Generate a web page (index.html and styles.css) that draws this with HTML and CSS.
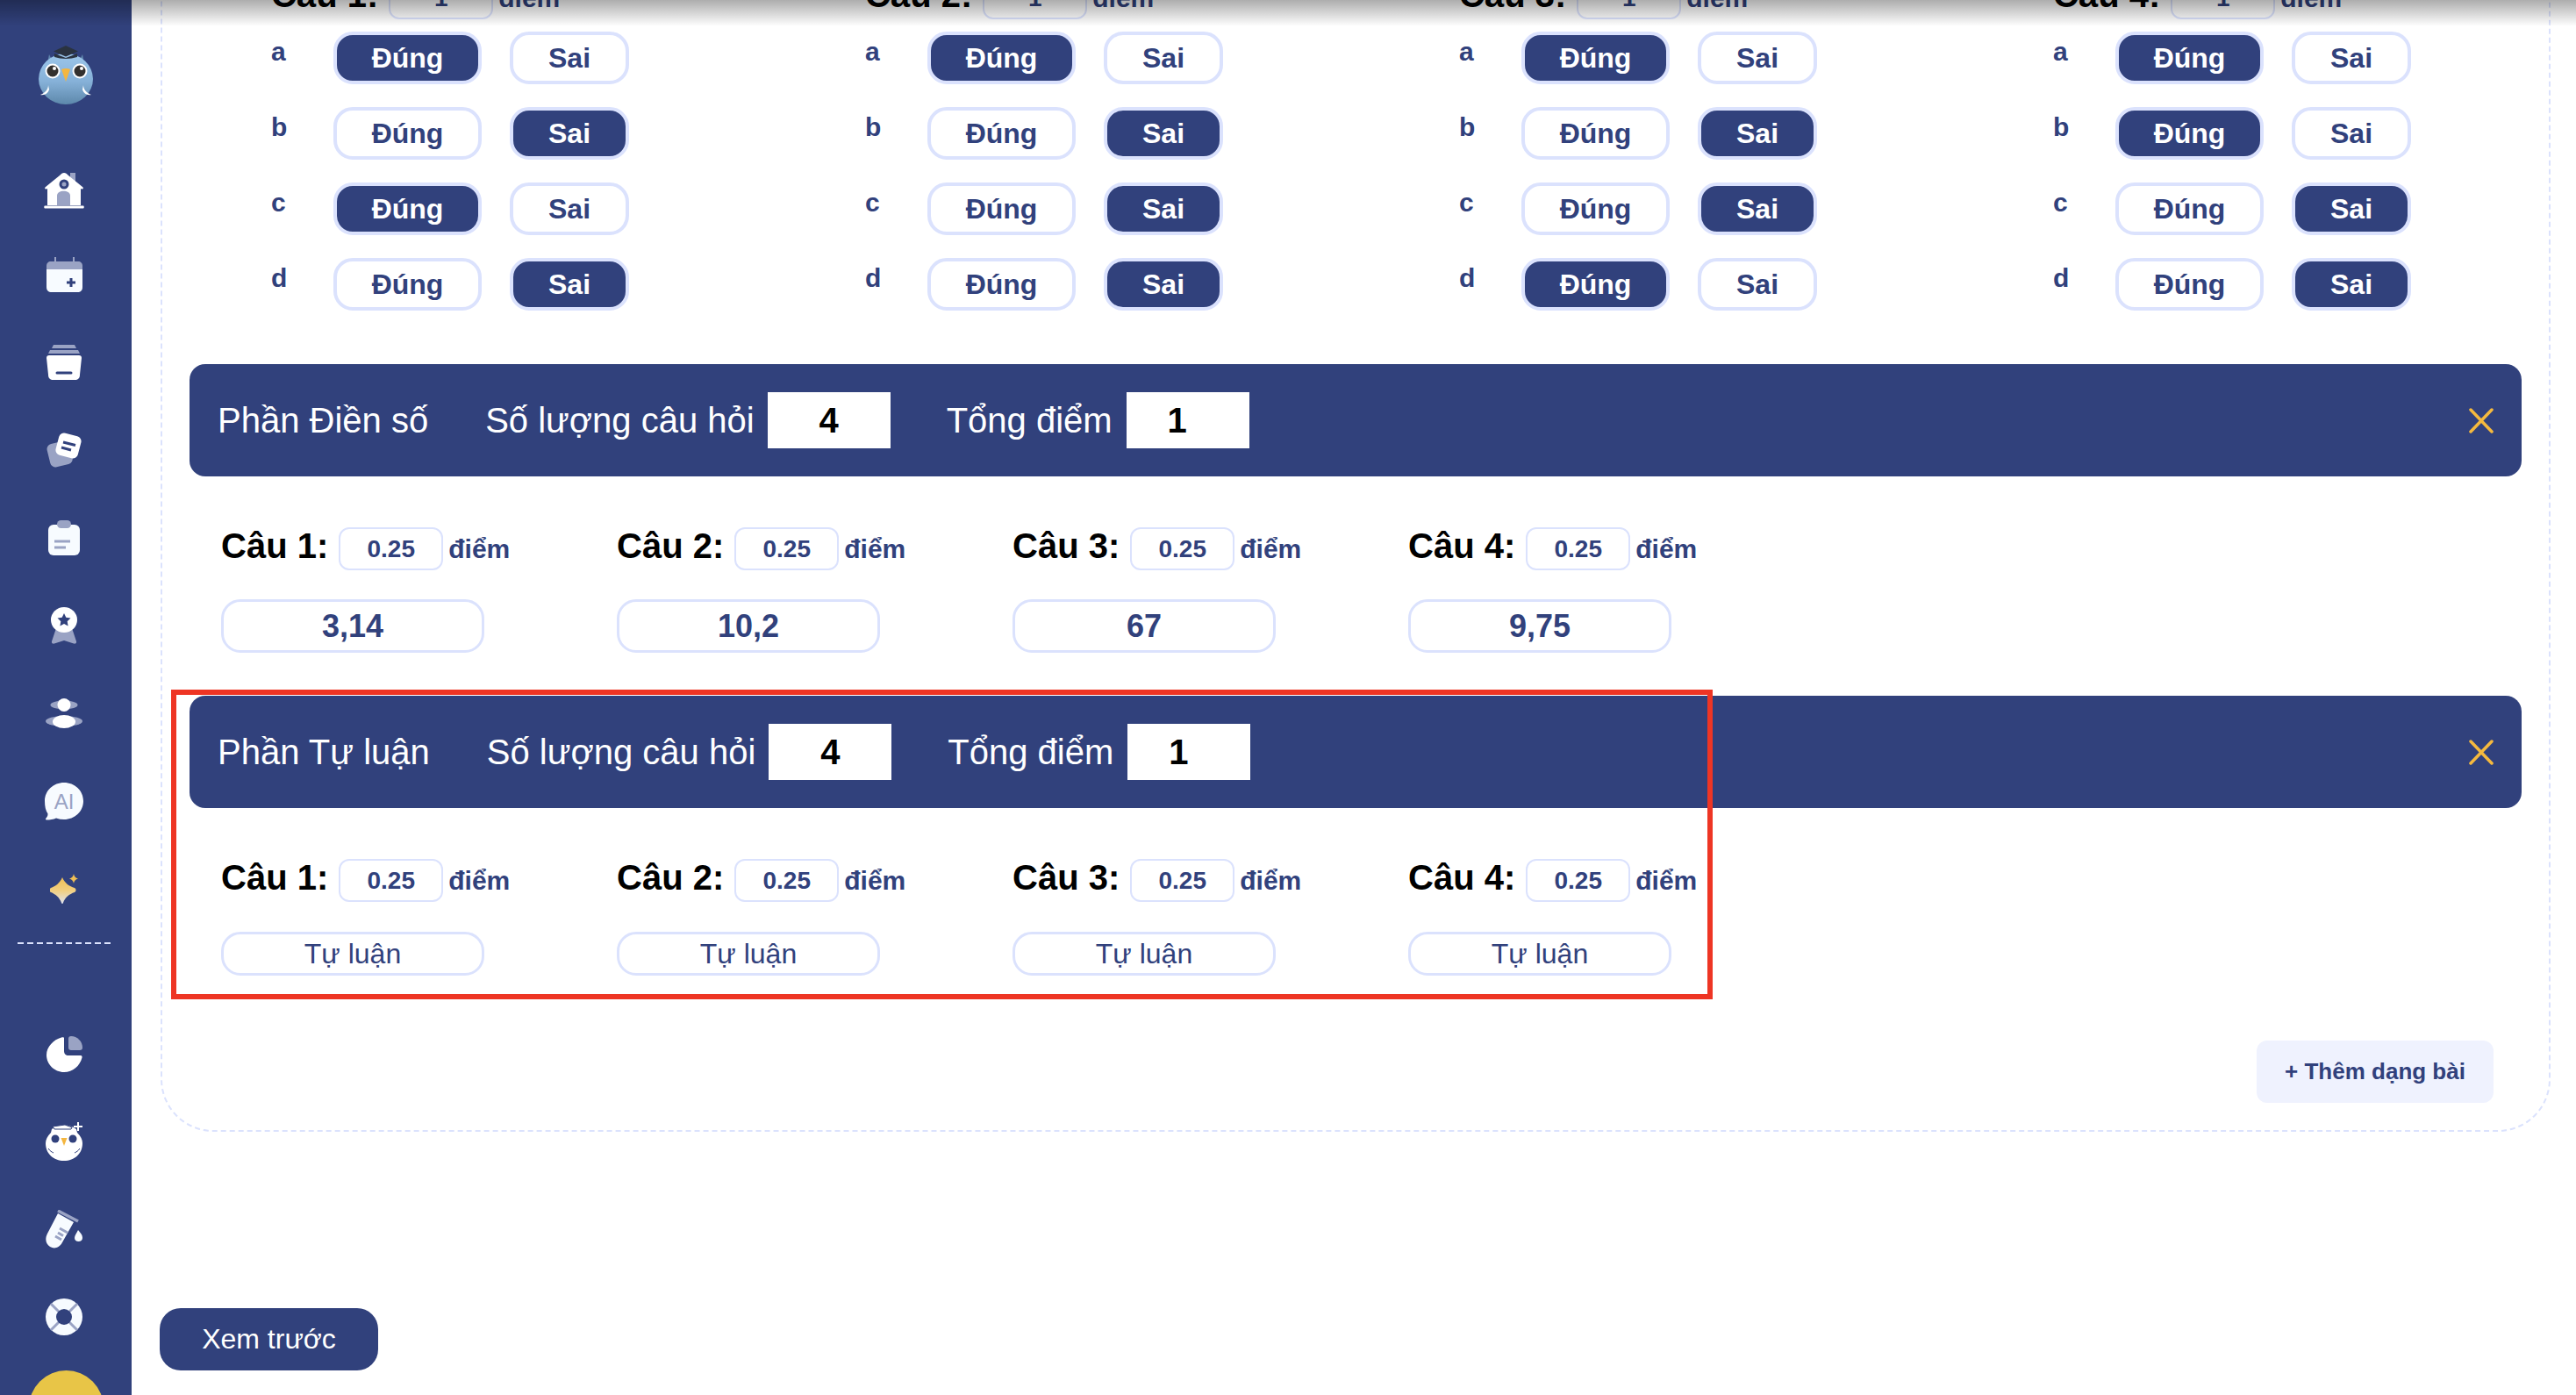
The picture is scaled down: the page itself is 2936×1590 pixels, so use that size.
FILE: index.html
```html
<!DOCTYPE html>
<html lang="vi">

<head>
    <meta charset="UTF-8">
    <meta name="viewport" content="width=device-width, initial-scale=1.0">
    <title>Tạo đề thi</title>
    <link rel="stylesheet" href="styles.css">
</head>

<body>
    <div class="top-shadow"></div>

    <aside class="sidebar">
        <svg class="logo" width="62" height="67" viewBox="0 0 62 67">
            <defs>
                <linearGradient id="owlBody" x1="0" y1="0" x2="0" y2="1">
                    <stop offset="0" stop-color="#9cc6ea" />
                    <stop offset="0.55" stop-color="#86b1d8" />
                    <stop offset="1" stop-color="#5d88ab" />
                </linearGradient>
            </defs>
            <path d="M12 10l2 4h34l2-4 2 10H10z" fill="#5f86ad" />
            <ellipse cx="31" cy="38" rx="31" ry="29" fill="url(#owlBody)" />
            <path d="M17 6.500L31 0l14 6.500-14 6z" fill="#2a3340" />
            <path d="M18 9v4c8 2.500 18 2.500 26 0V9l-13 5z" fill="#2a3340" />
            <circle cx="16" cy="29" r="8.500" fill="#fff" />
            <circle cx="47" cy="29" r="8.500" fill="#fff" />
            <circle cx="16" cy="29" r="6.500" fill="#33302e" />
            <circle cx="47" cy="29" r="6.500" fill="#33302e" />
            <circle cx="18" cy="26" r="2" fill="#fff" />
            <circle cx="49" cy="26" r="2" fill="#fff" />
            <path d="M26 27c3-1.500 7-1.500 10 0l-5 14z" fill="#f4b63f" />
            <path d="M11 45c0 5-4 9-9 11 5 1 9-2 10-6zM51 45c0 5 4 9 9 11-5 1-9-2-10-6z" fill="#fff" />
        </svg>

        <nav class="nav-group">
            <a class="nav-item nav-home" href="#">
                <svg width="46" height="42" viewBox="0 0 46 42">
                    <path d="M30 1h6v12h-6z" fill="#9aa3c4" />
                    <path d="M23 1c2 0 3 1 5 3l16 13c1.500 1 1 3-1 2.500l-1-.5V38H4V19l-1 .5c-2 .5-2.500-1.500-1-2.500L18 4c2-2 3-3 5-3z" fill="#fff" />
                    <path d="M1 38.500h44c1 0 1 3 0 3H1c-1 0-1-3 0-3z" fill="#fff" />
                    <circle cx="23" cy="14" r="5.500" fill="#31417c" />
                    <circle cx="23" cy="14" r="2.500" fill="#9aa3c4" />
                    <path d="M15 38V27c0-7 15-7 15 0v11z" fill="#9aa3c4" />
                </svg>
            </a>
            <a class="nav-item" href="#">
                <svg width="41" height="40" viewBox="0 0 41 40">
                    <path d="M9 0h2v6H9zM30 0h2v6h-2z" fill="#9aa3c4" />
                    <path d="M0 14V10c0-3 2-5 5-5h31c3 0 5 2 5 5v4z" fill="#9aa3c4" />
                    <path d="M0 14h41v20c0 4-2 6-6 6H6c-4 0-6-2-6-6z" fill="#f7fbff" />
                    <path d="M28 24v10M23 29h10" stroke="#31417c" stroke-width="3" />
                </svg>
            </a>
            <a class="nav-item" href="#">
                <svg width="40" height="40" viewBox="0 0 40 40">
                    <path d="M8 0h24l2 4H6z" fill="#9aa3c4" />
                    <path d="M4 6h32l2 4H2z" fill="#9aa3c4" />
                    <path d="M3 12h34c2 0 3 1 3 3l-2 19c0 4-2 6-6 6H8c-4 0-6-2-6-6L0 15c0-2 1-3 3-3z" fill="#fff" />
                    <path d="M12 32h16" stroke="#31417c" stroke-width="3" stroke-linecap="round" />
                </svg>
            </a>
            <a class="nav-item" href="#">
                <svg width="42" height="42" viewBox="0 0 42 42">
                    <rect x="3" y="12" width="26" height="27" rx="6" fill="#9aa3c4" transform="rotate(-14 16 25)" />
                    <rect x="13" y="3" width="26" height="26" rx="6" fill="#fff" transform="rotate(15 26 16)" />
                    <path d="M20 12l14 3.500M18 18l11 3" stroke="#31417c" stroke-width="3" />
                </svg>
            </a>
            <a class="nav-item" href="#">
                <svg width="36" height="40" viewBox="0 0 36 40">
                    <rect y="5" width="36" height="35" rx="6" fill="#f7fbff" />
                    <rect x="10" width="16" height="9" rx="4.500" fill="#9aa3c4" />
                    <path d="M7 24h18M7 31h13" stroke="#9aa3c4" stroke-width="3" />
                </svg>
            </a>
            <a class="nav-item" href="#">
                <svg width="30" height="42" viewBox="0 0 30 42">
                    <path d="M6 24h18l5 15c.500 2-1 3-3 2.500L15 38 4 41.500c-2 .500-3.500-.500-3-2.500z" fill="#9aa3c4" />
                    <ellipse cx="15" cy="14.500" rx="15" ry="14.500" fill="#fff" />
                    <path d="M15 7l2.300 4.800 5.200.7-3.800 3.700.9 5.300-4.600-2.500-4.600 2.500.9-5.300-3.800-3.700 5.200-.7z" fill="#31417c" />
                </svg>
            </a>
            <a class="nav-item" href="#">
                <svg width="42" height="34" viewBox="0 0 42 34">
                    <ellipse cx="21" cy="7.500" rx="15.500" ry="5" fill="#9aa3c4" />
                    <ellipse cx="21" cy="26" rx="21" ry="6" fill="#9aa3c4" />
                    <ellipse cx="21" cy="7.500" rx="7.500" ry="7.500" fill="#fff" />
                    <ellipse cx="21" cy="26.500" rx="13" ry="7.500" fill="#fff" />
                </svg>
            </a>
            <a class="nav-item" href="#">
                <svg width="44" height="44" viewBox="0 0 44 44">
                    <path d="M22 1c12 0 22 9 22 21S34 43 22 43c-3 0-6-.500-9-1.500-3 1.500-7 2-11 2-1 0-1.500-1-.500-2 1.500-1.500 2-3 2-5C1 33 0 28 0 22 0 10 10 1 22 1z" fill="#f7fbff" />
                    <text class="ai-text" x="22" y="31" text-anchor="middle">AI</text>
                </svg>
            </a>
            <a class="nav-item" href="#">
                <svg width="32" height="34" viewBox="0 0 32 34">
                    <defs>
                        <linearGradient id="sparkFill" x1="0" y1="0" x2="0" y2="1">
                            <stop offset="0" stop-color="#f0bf55" />
                            <stop offset="0.5" stop-color="#f2cf80" />
                            <stop offset="1" stop-color="#dfe3f2" />
                        </linearGradient>
                    </defs>
                    <path d="M14 4C17 11 22 14 28 16 30 17 30 20 28 21 22 23 17 27 15 33 14.500 34.500 13.500 34.500 13 33 11 27 6 23 1 21-1 20-1 17 1 16 6 14 11 11 14 4z" fill="url(#sparkFill)" />
                    <path d="M27 0c.500 3 2 4.500 5 5.500-3 1-4.500 2.500-5 5.500-.500-3-2-4.500-5-5.500 3-1 4.500-2.500 5-5.500z" fill="#f0bf55" />
                </svg>
            </a>
        </nav>

        <div class="nav-divider"></div>

        <nav class="nav-group nav-bottom">
            <a class="nav-item" href="#">
                <svg width="41" height="41" viewBox="0 0 41 41">
                    <path d="M20 2v15c0 3 2 5 5 5h14c1 0 2 1 1.500 2.500C38 34 30 41 20 41 9 41 0 32 0 21.500 0 12 8 4 17 1.500 19 1 20 1 20 2z" fill="#fff" />
                    <path d="M25 3c0-2 1-3 3-3 7 0 13 6 13 13 0 2-1 3-3 3H28c-2 0-3-1-3-3z" fill="#9aa3c4" />
                </svg>
            </a>
            <a class="nav-item" href="#">
                <svg width="42" height="44" viewBox="0 0 42 44">
                    <path d="M7 8c8-6 20-6 28 0l1 4c4 4 6 8 6 12 0 12-9 20-21 20S0 36 0 24c0-4 2-8 6-12z" fill="#fff" />
                    <path d="M8 5l14-2 8 3-1 2H10z" fill="#fff" stroke="#31417c" stroke-width="1" />
                    <path d="M37 0v10M32 5h10" stroke="#fff" stroke-width="2" />
                    <circle cx="11" cy="19" r="4.500" fill="#31417c" />
                    <circle cx="31" cy="19" r="4.500" fill="#31417c" />
                    <path d="M17.500 18h7L21 27z" fill="#f4b63f" />
                    <path d="M3 30c2 3 4 4 6 5M39 30c-2 3-4 4-6 5" stroke="#31417c" stroke-width="1" fill="none" />
                </svg>
            </a>
            <a class="nav-item" href="#">
                <svg width="42" height="44" viewBox="0 0 42 44">
                    <path d="M14 4L32 14 19 37c-3 6-9 8-14 5S-1 33 2 27z" fill="#f7fbff" />
                    <path d="M14 1l23 12" stroke="#9aa3c4" stroke-width="3.500" />
                    <path d="M16 21l9 5M14 26l6 3.500M11 30l7 4" stroke="#9aa3c4" stroke-width="3" />
                    <path d="M37 23c3 4 5 5 5 9 0 2.500-2 4-4.500 4S33 34.500 33 32c0-3 2-5 4-9z" fill="#f7fbff" />
                </svg>
            </a>
            <a class="nav-item" href="#">
                <svg width="42" height="42" viewBox="0 0 42 42">
                    <circle cx="21" cy="21" r="21" fill="#f7fbff" />
                    <path d="M6 6l30 30M36 6L6 36" stroke="#9aa3c4" stroke-width="3" />
                    <circle cx="21" cy="21" r="9" fill="#31417c" />
                </svg>
            </a>
        </nav>

        <div class="avatar"></div>
    </aside>

    <main class="main">
        <div class="panel">
            <!-- Phần Đúng sai -->
            <div class="tf-grid">
                <div class="tf-col">
                    <div class="q-head">
                        <span class="q-label">Câu 1:</span>
                        <div class="q-score">1</div>
                        <span class="q-unit">điểm</span>
                    </div>
                    <div class="tf-row"><span class="tf-key">a</span><div class="tf-btn tf-yes active">Đúng</div><div class="tf-btn tf-no">Sai</div></div>
                    <div class="tf-row"><span class="tf-key">b</span><div class="tf-btn tf-yes">Đúng</div><div class="tf-btn tf-no active">Sai</div></div>
                    <div class="tf-row"><span class="tf-key">c</span><div class="tf-btn tf-yes active">Đúng</div><div class="tf-btn tf-no">Sai</div></div>
                    <div class="tf-row"><span class="tf-key">d</span><div class="tf-btn tf-yes">Đúng</div><div class="tf-btn tf-no active">Sai</div></div>
                </div>
                <div class="tf-col">
                    <div class="q-head">
                        <span class="q-label">Câu 2:</span>
                        <div class="q-score">1</div>
                        <span class="q-unit">điểm</span>
                    </div>
                    <div class="tf-row"><span class="tf-key">a</span><div class="tf-btn tf-yes active">Đúng</div><div class="tf-btn tf-no">Sai</div></div>
                    <div class="tf-row"><span class="tf-key">b</span><div class="tf-btn tf-yes">Đúng</div><div class="tf-btn tf-no active">Sai</div></div>
                    <div class="tf-row"><span class="tf-key">c</span><div class="tf-btn tf-yes">Đúng</div><div class="tf-btn tf-no active">Sai</div></div>
                    <div class="tf-row"><span class="tf-key">d</span><div class="tf-btn tf-yes">Đúng</div><div class="tf-btn tf-no active">Sai</div></div>
                </div>
                <div class="tf-col">
                    <div class="q-head">
                        <span class="q-label">Câu 3:</span>
                        <div class="q-score">1</div>
                        <span class="q-unit">điểm</span>
                    </div>
                    <div class="tf-row"><span class="tf-key">a</span><div class="tf-btn tf-yes active">Đúng</div><div class="tf-btn tf-no">Sai</div></div>
                    <div class="tf-row"><span class="tf-key">b</span><div class="tf-btn tf-yes">Đúng</div><div class="tf-btn tf-no active">Sai</div></div>
                    <div class="tf-row"><span class="tf-key">c</span><div class="tf-btn tf-yes">Đúng</div><div class="tf-btn tf-no active">Sai</div></div>
                    <div class="tf-row"><span class="tf-key">d</span><div class="tf-btn tf-yes active">Đúng</div><div class="tf-btn tf-no">Sai</div></div>
                </div>
                <div class="tf-col">
                    <div class="q-head">
                        <span class="q-label">Câu 4:</span>
                        <div class="q-score">1</div>
                        <span class="q-unit">điểm</span>
                    </div>
                    <div class="tf-row"><span class="tf-key">a</span><div class="tf-btn tf-yes active">Đúng</div><div class="tf-btn tf-no">Sai</div></div>
                    <div class="tf-row"><span class="tf-key">b</span><div class="tf-btn tf-yes active">Đúng</div><div class="tf-btn tf-no">Sai</div></div>
                    <div class="tf-row"><span class="tf-key">c</span><div class="tf-btn tf-yes">Đúng</div><div class="tf-btn tf-no active">Sai</div></div>
                    <div class="tf-row"><span class="tf-key">d</span><div class="tf-btn tf-yes">Đúng</div><div class="tf-btn tf-no active">Sai</div></div>
                </div>
            </div>

            <!-- Phần Điền số -->
            <section class="part part-number">
                <div class="part-bar">
                    <span class="part-title">Phần Điền số</span>
                    <span class="part-text">Số lượng câu hỏi</span>
                    <div class="part-input">4</div>
                    <span class="part-text part-total">Tổng điểm</span>
                    <div class="part-input part-input-total">1</div>
                    <svg class="part-close" width="28" height="29" viewBox="0 0 28 29">
                        <path d="M2 2l24 25M26 2L2 27" stroke="#f5b93e" stroke-width="3.500" stroke-linecap="round" />
                    </svg>
                </div>
                <div class="q-grid">
                    <div class="q-cell">
                        <div class="q-head"><span class="q-label">Câu 1:</span><div class="q-score">0.25</div><span class="q-unit">điểm</span></div>
                        <div class="answer">3,14</div>
                    </div>
                    <div class="q-cell">
                        <div class="q-head"><span class="q-label">Câu 2:</span><div class="q-score">0.25</div><span class="q-unit">điểm</span></div>
                        <div class="answer">10,2</div>
                    </div>
                    <div class="q-cell">
                        <div class="q-head"><span class="q-label">Câu 3:</span><div class="q-score">0.25</div><span class="q-unit">điểm</span></div>
                        <div class="answer">67</div>
                    </div>
                    <div class="q-cell">
                        <div class="q-head"><span class="q-label">Câu 4:</span><div class="q-score">0.25</div><span class="q-unit">điểm</span></div>
                        <div class="answer">9,75</div>
                    </div>
                </div>
            </section>

            <!-- Phần Tự luận -->
            <section class="part part-essay">
                <div class="part-bar">
                    <span class="part-title">Phần Tự luận</span>
                    <span class="part-text">Số lượng câu hỏi</span>
                    <div class="part-input">4</div>
                    <span class="part-text part-total">Tổng điểm</span>
                    <div class="part-input part-input-total">1</div>
                    <svg class="part-close" width="28" height="29" viewBox="0 0 28 29">
                        <path d="M2 2l24 25M26 2L2 27" stroke="#f5b93e" stroke-width="3.500" stroke-linecap="round" />
                    </svg>
                </div>
                <div class="q-grid">
                    <div class="q-cell">
                        <div class="q-head"><span class="q-label">Câu 1:</span><div class="q-score">0.25</div><span class="q-unit">điểm</span></div>
                        <div class="answer answer-essay">Tự luận</div>
                    </div>
                    <div class="q-cell">
                        <div class="q-head"><span class="q-label">Câu 2:</span><div class="q-score">0.25</div><span class="q-unit">điểm</span></div>
                        <div class="answer answer-essay">Tự luận</div>
                    </div>
                    <div class="q-cell">
                        <div class="q-head"><span class="q-label">Câu 3:</span><div class="q-score">0.25</div><span class="q-unit">điểm</span></div>
                        <div class="answer answer-essay">Tự luận</div>
                    </div>
                    <div class="q-cell">
                        <div class="q-head"><span class="q-label">Câu 4:</span><div class="q-score">0.25</div><span class="q-unit">điểm</span></div>
                        <div class="answer answer-essay">Tự luận</div>
                    </div>
                </div>
                <div class="red-mark"></div>
            </section>

            <div class="add-row">
                <div class="add-btn">+ Thêm dạng bài</div>
            </div>
        </div>

        <div class="preview-btn">Xem trước</div>
    </main>
</body>

</html>
```

FILE: styles.css
```css
* {
    box-sizing: border-box;
}

body {
    font-family: 'Liberation Sans', Arial, sans-serif;
    margin: 0;
    height: 100vh;
    display: flex;
    overflow: hidden;
    position: relative;
    background: #fff;
    color: #31417c;
}

.top-shadow {
    position: absolute;
    top: 0;
    left: 0;
    width: 100%;
    height: 30px;
    background: linear-gradient(to bottom, rgba(0, 0, 0, 0.32), rgba(0, 0, 0, 0));
    z-index: 5;
}

/* sidebar */
.sidebar {
    width: 150px;
    height: 100%;
    flex-shrink: 0;
    background: #31417c;
    display: flex;
    flex-direction: column;
    align-items: center;
    padding-top: 52px;
    overflow: hidden;
}

.logo {
    flex-shrink: 0;
    margin-bottom: 44px;
}

.nav-group {
    width: 100%;
    flex-shrink: 0;
}

.nav-item {
    height: 100px;
    padding-right: 4px;
    display: flex;
    align-items: center;
    justify-content: center;
}

.nav-home svg {
    margin-top: 8px;
}

.ai-text {
    font-family: 'Liberation Sans', Arial, sans-serif;
    font-size: 24px;
    fill: #9aa3c4;
}

.nav-divider {
    width: 110px;
    height: 2px;
    flex-shrink: 0;
    margin-top: 11px;
    background: repeating-linear-gradient(90deg, #dbe2fd 0, #dbe2fd 7px, transparent 7px, transparent 11px);
}

.nav-bottom {
    margin-top: 75px;
}

.avatar {
    width: 85px;
    height: 85px;
    flex-shrink: 0;
    margin-top: 11px;
    border-radius: 50%;
    background: #e8c547;
}

/* main content, page is scrolled so the panel starts above the window */
.main {
    flex: 1;
    min-width: 0;
    padding: 0 29px 0 33px;
}

.panel {
    margin-top: -60px;
    padding: 31px;
    border: 2px dashed #dbe2fd;
    border-radius: 60px;
}

.tf-grid {
    display: grid;
    grid-template-columns: repeat(4, 677px);
    margin-left: 93px;
    margin-bottom: 61px;
}

.q-head {
    display: flex;
    align-items: center;
}

.q-label {
    font-size: 40px;
    font-weight: 700;
    color: #000;
    margin-right: 12px;
    position: relative;
    top: -3px;
}

.q-score {
    width: 119px;
    height: 49px;
    border: 2px solid #dbe2fd;
    border-radius: 12px;
    display: flex;
    align-items: center;
    justify-content: center;
    font-size: 28px;
    font-weight: 700;
}

.q-unit {
    font-size: 30px;
    font-weight: 700;
    margin-left: 6px;
}

.tf-col .q-head {
    margin-bottom: 14px;
}

.tf-row {
    display: flex;
    align-items: flex-start;
    margin-bottom: 26px;
}

.tf-row:last-child {
    margin-bottom: 0;
}

.tf-key {
    width: 71px;
    padding-top: 6px;
    font-size: 30px;
    font-weight: 700;
}

.tf-btn {
    height: 60px;
    border: 4px solid #dbe2fd;
    border-radius: 22px;
    display: flex;
    align-items: center;
    justify-content: center;
    font-size: 32px;
    font-weight: 700;
}

.tf-btn.active {
    background: #31417c;
    color: #fff;
}

.tf-yes {
    width: 169px;
    margin-right: 32px;
}

.tf-no {
    width: 136px;
}

/* part blocks */
.part {
    position: relative;
}

.part-bar {
    height: 128px;
    padding: 0 32px 0 32px;
    background: #31417c;
    border-radius: 18px;
    display: flex;
    align-items: center;
    color: #fff;
    font-size: 40px;
}

.part-title {
    margin-right: 65px;
}

.part-input {
    width: 140px;
    height: 64px;
    margin-left: 15px;
    background: #fff;
    color: #000;
    font-weight: 700;
    display: flex;
    align-items: center;
    justify-content: center;
}

.part-input-total {
    margin-left: 16px;
    padding-right: 24px;
}

.part-total {
    margin-left: 64px;
}

.part-close {
    margin-left: auto;
}

.q-grid {
    display: grid;
    grid-template-columns: repeat(4, 451px);
    padding-left: 36px;
    margin-top: 58px;
}

.answer {
    width: 300px;
    height: 61px;
    margin-top: 33px;
    border: 3px solid #dbe2fd;
    border-radius: 22px;
    display: flex;
    align-items: center;
    justify-content: center;
    font-size: 36px;
    font-weight: 700;
}

.answer-essay {
    height: 50px;
    margin-top: 34px;
    font-size: 32px;
    font-weight: 400;
}

.part-number {
    margin-bottom: 49px;
}

/* red box drawn over the essay part */
.red-mark {
    position: absolute;
    top: -7px;
    left: -21px;
    width: 1757px;
    height: 353px;
    border: 6px solid #ee3524;
}

.add-row {
    display: flex;
    justify-content: flex-end;
    padding-right: 32px;
    margin-top: 74px;
}

.add-btn {
    width: 270px;
    height: 71px;
    background: #eff2fe;
    border-radius: 12px;
    display: flex;
    align-items: center;
    justify-content: center;
    font-size: 26px;
    font-weight: 700;
}

.preview-btn {
    width: 249px;
    height: 71px;
    margin-top: 201px;
    margin-left: -1px;
    background: #31417c;
    border-radius: 24px;
    display: flex;
    align-items: center;
    justify-content: center;
    color: #fff;
    font-size: 32px;
}
```
